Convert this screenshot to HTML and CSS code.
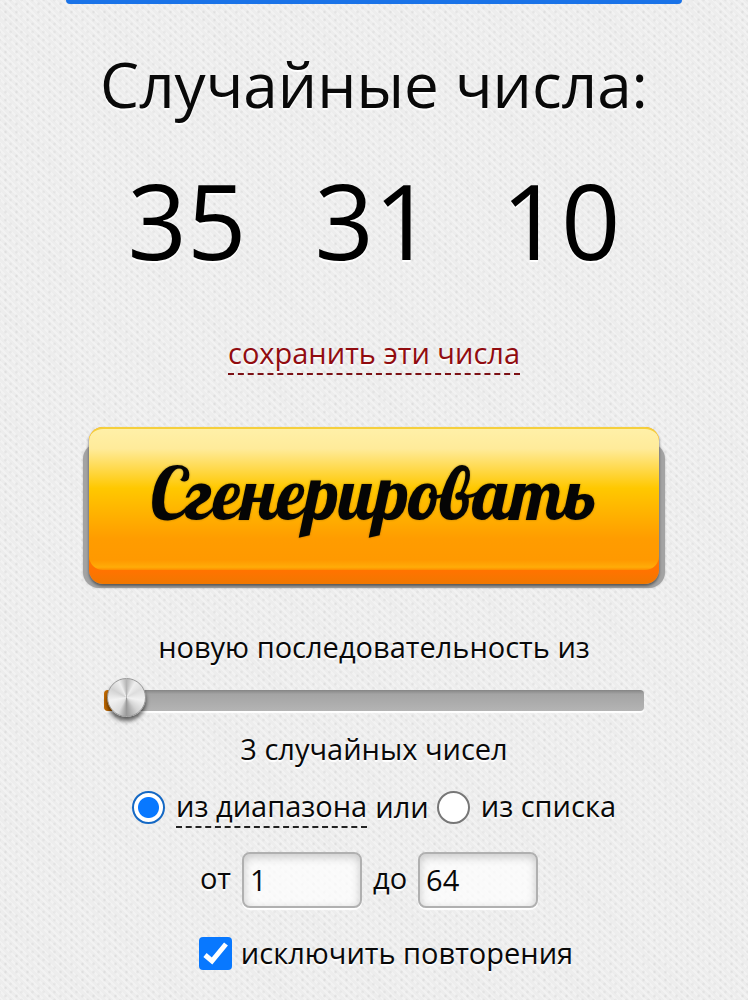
FILE: index.html
```
<!DOCTYPE html>
<html lang="ru">
<head>
    <meta charset="UTF-8">
    <meta name="viewport" content="width=device-width, initial-scale=1.0">
    <title>Случайные числа</title>
    <link rel="stylesheet" href="styles.css">
</head>
<body>
    <div class="top-banner"></div>

    <main class="container">
        <h1>Случайные числа:</h1>
        <div class="numbers">
            <span>35</span>
            <span>31</span>
            <span>10</span>
        </div>
        <a href="#save" class="save-link">сохранить эти числа</a>

        <form class="generator">
            <button type="button" class="generate-button"><span>Сгенерировать</span></button>

            <label class="line" for="count">новую последовательность из</label>
            <input type="range" id="count" class="slider" min="1" max="300" value="3">
            <output class="line" for="count">3 случайных чисел</output>

            <div class="row source-row">
                <input type="radio" name="source" id="source-range" checked>
                <label for="source-range" class="dashed">из диапазона</label>
                <span class="or">или</span>
                <input type="radio" name="source" id="source-list">
                <label for="source-list">из списка</label>
            </div>

            <div class="row range-row">
                <label for="from">от</label>
                <input type="text" id="from" value="1">
                <label for="to">до</label>
                <input type="text" id="to" value="64">
            </div>

            <div class="row unique-row">
                <input type="checkbox" id="unique" checked>
                <label for="unique">исключить повторения</label>
            </div>
        </form>
    </main>
</body>
</html>
```

FILE: styles.css
```
* {
    box-sizing: border-box;
}

body {
    margin: 0;
    color: #090909;
    font-family: "Open Sans", "Noto Sans", sans-serif;
    font-size: 29px;
    line-height: 40px;
    text-shadow: 0 2px 1px #fff;
    background-color: #ededed;
    /* woven paper texture */
    background-image:
        radial-gradient(circle, rgba(0, 0, 0, 0.08) 0, transparent 2px),
        radial-gradient(circle, rgba(0, 0, 0, 0.06) 0, transparent 2px),
        repeating-linear-gradient(45deg, transparent 0 3px, rgba(255, 255, 255, 0.3) 3px 5px);
    background-size: 11px 8px, 11px 8px, auto;
    background-position: 0 0, 5px 4px, 0 0;
}

.top-banner {
    height: 4px;
    margin: 0 66px;
    background-color: #1a73e8;
    border-radius: 0 0 8px 8px;
}

.container {
    display: flex;
    flex-direction: column;
    align-items: center;
    padding: 36px 20px 24px;
}

h1 {
    margin: 0;
    font-size: 62px;
    font-weight: normal;
    line-height: 88px;
}

.numbers {
    display: flex;
    gap: 68px;
    margin-top: 20px;
    color: #000;
    font-size: 104px;
    line-height: 144px;
}

.save-link {
    margin-top: 41px;
    color: #910c10;
    text-decoration: none;
    border-bottom: 2px dashed #7c1014;
}

.generator {
    display: flex;
    flex-direction: column;
    align-items: center;
    width: 100%;
    margin-top: 52px;
}

.generate-button {
    position: relative;
    width: 100%;
    max-width: 570px;
    padding: 26px 0 51px;
    border: 0;
    border-radius: 14px;
    background: linear-gradient(#ff9900, #ff7300 92%, #f07800);
    color: #050505;
    font-family: "Lobster", "Liberation Serif", serif;
    font-size: 72px;
    font-weight: normal;
    line-height: 80px;
    text-shadow: 0 0 2px rgba(70, 50, 0, 0.5);
    cursor: pointer;
    box-shadow: 0 2px 3px #555;
}

/* raised face */
.generate-button::before {
    content: "";
    position: absolute;
    inset: 0 0 14px;
    border-top: 2px solid #f5cf3c;
    border-radius: 14px;
    background: linear-gradient(#fff0a8, #ffeb9a 14%, #ffc800 42%, #ff9c00 78%, #ff9900 93%, #ffac08 98%, #ff8c00);
}

/* grey socket behind */
.generate-button::after {
    content: "";
    position: absolute;
    inset: 16px -6px -4px;
    z-index: -1;
    border-radius: 16px;
    background-color: #a3a3a3;
    box-shadow: 0 0 2px #bbb;
}

.generate-button span {
    position: relative;
}

.line {
    margin-top: 18px;
}

.generate-button + .line {
    margin-top: 43px;
}

.slider {
    width: 100%;
    max-width: 540px;
    height: 44px;
    margin: 11px 0 0;
    background: transparent;
    appearance: none;
}

.slider + .line {
    margin-top: 7px;
}

.slider::-webkit-slider-runnable-track {
    height: 21px;
    border-radius: 4px;
    background:
        linear-gradient(90deg, #c36a00 0 8px, transparent 8px),
        linear-gradient(#858585, #a4a4a4 20%, #b4b4b4);
    box-shadow: 0 2px 1px #fff;
}

.slider::-webkit-slider-thumb {
    width: 39px;
    height: 39px;
    margin-top: -12px;
    border: 1px solid #999;
    border-radius: 50%;
    appearance: none;
    background: conic-gradient(#b5b5b5, #eee 30deg, #ddd 60deg, #f2f2f2 100deg, #d4d4d4 140deg, #999 180deg, #ddd 210deg, #f2f2f2 260deg, #d2d2d2 300deg, #eee 335deg, #b5b5b5);
    box-shadow: 0 4px 4px rgba(0, 0, 0, 0.6);
}

.row {
    display: flex;
    align-items: center;
    justify-content: center;
}

.row input {
    flex: none;
    margin: 0;
}

.source-row {
    margin-top: 17px;
}

.source-row label {
    margin-left: 11px;
    border-bottom: 2px solid transparent;
}

.source-row .dashed {
    border-bottom: 2px dashed #222;
}

.source-row .or {
    margin: 0 8px;
}

input[type="radio"] {
    width: 33px;
    height: 33px;
    border: 2px solid #777;
    border-radius: 50%;
    appearance: none;
    background-color: #fff;
}

input[type="radio"]:checked {
    border-color: #1468c4;
    background: radial-gradient(circle, #0878ff 10px, #fff 11px);
}

.range-row {
    gap: 11px;
    margin-top: 24px;
    padding-right: 10px;
}

.range-row label {
    padding-bottom: 4px;
}

input[type="text"] {
    width: 120px;
    height: 56px;
    padding: 0 6px 2px;
    border: 2px solid #b0b0b0;
    border-radius: 8px;
    background-color: rgba(255, 255, 255, 0.7);
    color: #090909;
    font: inherit;
    box-shadow: inset 0 3px 10px rgba(0, 0, 0, 0.2), 0 2px 1px #fff;
}

.unique-row {
    gap: 9px;
    margin-top: 25px;
    padding-left: 24px;
}

input[type="checkbox"] {
    width: 33px;
    height: 33px;
    border-radius: 4px;
    appearance: none;
    background: #0878ff url("data:image/svg+xml,%3Csvg xmlns='http://www.w3.org/2000/svg' viewBox='0 0 33 33'%3E%3Cpath d='M6 18l7 6L27 7' fill='none' stroke='white' stroke-width='5'/%3E%3C/svg%3E");
}
```
